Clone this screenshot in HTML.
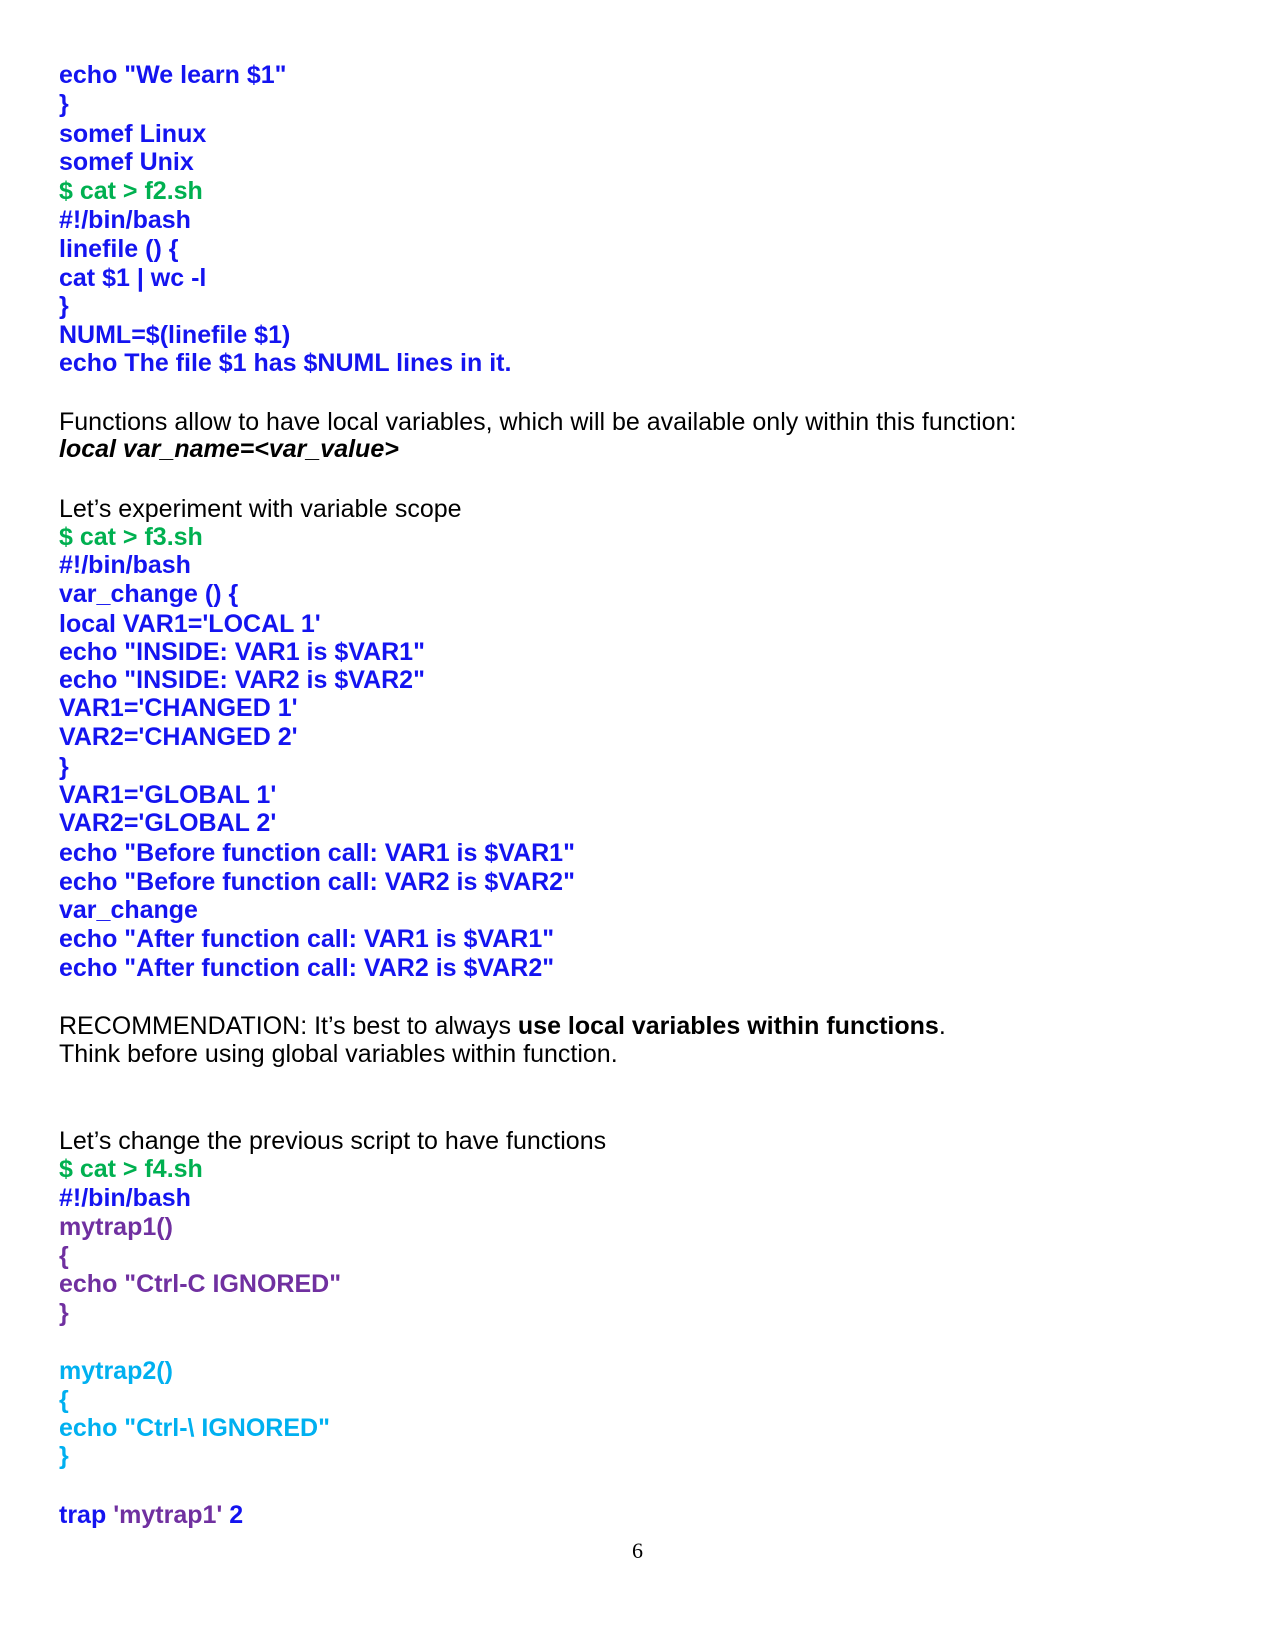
<!DOCTYPE html>
<html><head><meta charset="utf-8"><style>
body{margin:0;background:#fff;width:1275px;height:1650px;position:relative;overflow:hidden;font-family:"Liberation Sans",Arial,sans-serif}
.l{position:absolute;left:59px;white-space:pre;line-height:28px;height:28px}
.c{font-weight:bold;font-size:25px;color:#1414f0}
.g{color:#00b050}.p{color:#7030a0}.cy{color:#00b0f0}
.t{font-size:25px;color:#000}
</style></head><body>
<div class="l c" style="top:61px">echo "We learn $1"</div>
<div class="l c" style="top:90px">}</div>
<div class="l c" style="top:120px">somef Linux</div>
<div class="l c" style="top:148px">somef Unix</div>
<div class="l c g" style="top:177px">$ cat &gt; f2.sh</div>
<div class="l c" style="top:206px">#!/bin/bash</div>
<div class="l c" style="top:235px">linefile () {</div>
<div class="l c" style="top:264px">cat $1 | wc -l</div>
<div class="l c" style="top:292px">}</div>
<div class="l c" style="top:321px">NUML=$(linefile $1)</div>
<div class="l c" style="top:349px">echo The file $1 has $NUML lines in it.</div>
<div class="l t" style="top:408px">Functions allow to have local variables, which will be available only within this function:</div>
<div class="l t" style="top:435px;font-weight:bold;font-style:italic">local var_name=&lt;var_value&gt;</div>
<div class="l t" style="top:495px">Let’s experiment with variable scope</div>
<div class="l c g" style="top:523px">$ cat &gt; f3.sh</div>
<div class="l c" style="top:551px">#!/bin/bash</div>
<div class="l c" style="top:580px">var_change () {</div>
<div class="l c" style="top:610px">local VAR1='LOCAL 1'</div>
<div class="l c" style="top:638px">echo "INSIDE: VAR1 is $VAR1"</div>
<div class="l c" style="top:666px">echo "INSIDE: VAR2 is $VAR2"</div>
<div class="l c" style="top:694px">VAR1='CHANGED 1'</div>
<div class="l c" style="top:723px">VAR2='CHANGED 2'</div>
<div class="l c" style="top:753px">}</div>
<div class="l c" style="top:781px">VAR1='GLOBAL 1'</div>
<div class="l c" style="top:809px">VAR2='GLOBAL 2'</div>
<div class="l c" style="top:839px">echo "Before function call: VAR1 is $VAR1"</div>
<div class="l c" style="top:868px">echo "Before function call: VAR2 is $VAR2"</div>
<div class="l c" style="top:896px">var_change</div>
<div class="l c" style="top:925px">echo "After function call: VAR1 is $VAR1"</div>
<div class="l c" style="top:954px">echo "After function call: VAR2 is $VAR2"</div>
<div class="l t" style="top:1012px">RECOMMENDATION: It’s best to always <b>use local variables within functions</b>.</div>
<div class="l t" style="top:1040px">Think before using global variables within function.</div>
<div class="l t" style="top:1127px">Let’s change the previous script to have functions</div>
<div class="l c g" style="top:1155px">$ cat &gt; f4.sh</div>
<div class="l c" style="top:1184px">#!/bin/bash</div>
<div class="l c p" style="top:1213px">mytrap1()</div>
<div class="l c p" style="top:1242px">{</div>
<div class="l c p" style="top:1270px">echo "Ctrl-C IGNORED"</div>
<div class="l c p" style="top:1299px">}</div>
<div class="l c cy" style="top:1357px">mytrap2()</div>
<div class="l c cy" style="top:1386px">{</div>
<div class="l c cy" style="top:1414px">echo "Ctrl-\ IGNORED"</div>
<div class="l c cy" style="top:1442px">}</div>
<div class="l c" style="top:1501px">trap <span class="p">'mytrap1'</span> 2</div>
<div style="position:absolute;left:632px;top:1537px;font-family:'Liberation Serif',serif;font-size:22px;line-height:28px">6</div>
</body></html>
